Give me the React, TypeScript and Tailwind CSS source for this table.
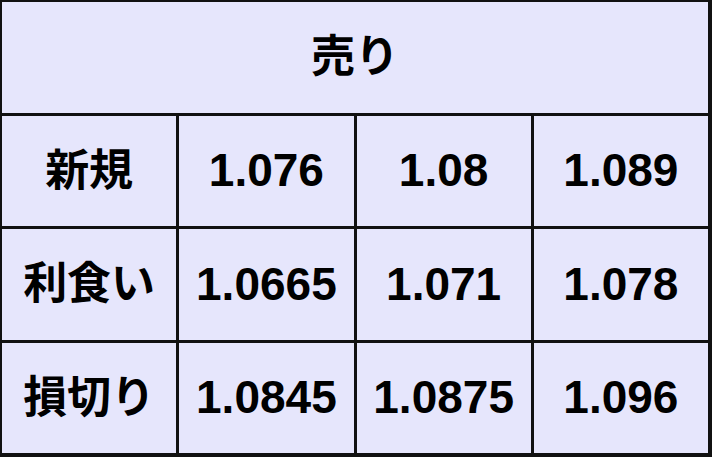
const rows: string[][] = [
  ["新規", "1.076", "1.08", "1.089"],
  ["利食い", "1.0665", "1.071", "1.078"],
  ["損切り", "1.0845", "1.0875", "1.096"],
];

export default function App() {
  return (
    <div
      className="w-[712px] h-[457px] bg-[#111111] pt-[2px] pl-[2px] pr-[4px] pb-[4px]"
      style={{ fontFamily: '"Liberation Sans", "Noto Sans CJK JP", sans-serif' }}
    >
      <div className="grid grid-cols-4 grid-rows-4 gap-[3px] h-full w-full">
        <div className="col-span-4 bg-[#e6e6fc] flex items-center justify-center text-[44px] font-bold text-black">
          売り
        </div>
        {rows.map((row) =>
          row.map((cell, i) => (
            <div
              key={row[0] + i}
              className={
                i === 0
                  ? "bg-[#e6e6fc] flex items-center justify-center text-[44px] font-bold text-black"
                  : "bg-[#e6e6fc] flex items-center justify-center text-[46px] font-bold text-black"
              }
            >
              {cell}
            </div>
          ))
        )}
      </div>
    </div>
  );
}
